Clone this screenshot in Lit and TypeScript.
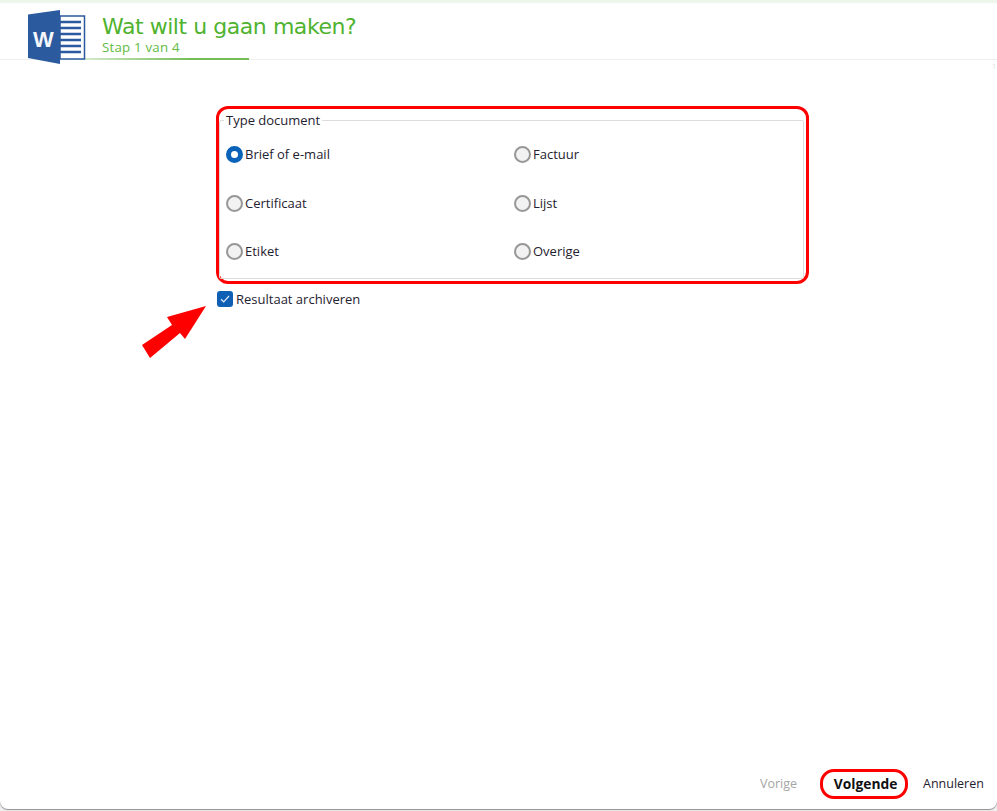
import { LitElement, html, css } from "lit";
import { customElement } from "lit/decorators.js";

const options = [
  ["Brief of e-mail", true],
  ["Factuur", false],
  ["Certificaat", false],
  ["Lijst", false],
  ["Etiket", false],
  ["Overige", false],
] as const;

@customElement("app-root")
export class AppRoot extends LitElement {
  static styles = css`
    :host {
      display: block;
      width: 997px;
      height: 811px;
      background: #f0f0f0;
      font-family: "Open Sans", "Noto Sans", "Liberation Sans", sans-serif;
      font-size: 13px;
      color: #1f2230;
      overflow: hidden;
      position: relative;
    }
    .strip { height: 3px; background: #eef5ea; }
    .window {
      height: 806px;
      background: #fff;
      border-radius: 0 0 8px 8px;
      display: flex;
      flex-direction: column;
      box-shadow: 0 1px 1px #8f8f8f;
    }
    .header {
      height: 57px;
      box-sizing: border-box;
      display: flex;
      align-items: flex-start;
      padding-left: 27px;
      position: relative;
      border-bottom: 1px solid #efefef;
    }
    .logo { margin-top: 6px; flex: none; position: relative; z-index: 1; }
    .headtext { margin-left: 15px; padding-top: 11px; color: #4fb330; }
    .title { font-size: 22px; line-height: 26px; font-family: "DejaVu Sans", sans-serif; letter-spacing: -0.45px; }
    .step { font-size: 13.3px; line-height: 14px; color: #62bb45; letter-spacing: 0.2px; }
    .accent {
      position: absolute;
      left: 60px;
      width: 189px;
      bottom: -1px;
      height: 2px;
      background: linear-gradient(to right, #eef5ea, #b5dca6 30%, #74bd56 70%, #74bd56);
    }
    .body { flex: 1; padding: 46px 0 0 216px; display: flex; flex-direction: column; align-items: flex-start; }
    .ring {
      width: 593px;
      height: 178px;
      box-sizing: border-box;
      border: 3px solid #f00;
      border-radius: 12px;
      padding: 11px 2px 0 0;
    }
    .group {
      height: 159px;
      box-sizing: border-box;
      border: 1px solid #dcdcdc;
      border-radius: 2px;
      position: relative;
      display: grid;
      grid-template-columns: 288px 1fr;
      grid-template-rows: repeat(3, 48.5px);
      padding: 9px 0 0 6px;
    }
    .legend {
      position: absolute;
      left: 4px;
      top: -8px;
      background: #fff;
      padding: 0 2px;
      line-height: 15px;
    }
    .opt { display: flex; align-items: center; gap: 2px; height: 17px; line-height: 17px; margin-top: 16px; }
    .radio {
      width: 13px;
      height: 13px;
      border: 2px solid #979797;
      border-radius: 50%;
      background: #f2f2f2;
      flex: none;
    }
    .radio.on { border: 5px solid #0a63b8; width: 7px; height: 7px; background: #fff; }
    .check { display: flex; align-items: center; gap: 3px; margin: 7px 0 0 1px; line-height: 16px; }
    .box {
      width: 16px;
      height: 16px;
      background: #0f5fb5;
      border-radius: 3px;
      display: flex;
      align-items: center;
      justify-content: center;
    }
    .arrow { position: absolute; left: 140px; top: 300px; }
    .footer {
      height: 44px;
      display: flex;
      align-items: flex-start;
      padding-left: 760px;
      line-height: 16px;
      font-size: 12.5px;
    }
    .prev { color: #a4a4a4; margin-top: 11px; }
    .next {
      font-weight: 700;
      font-size: 13.8px;
      color: #111;
      border: 3px solid #f00;
      border-radius: 14px;
      width: 88px;
      height: 30px;
      box-sizing: border-box;
      margin: 4px 0 0 23px;
      display: flex;
      align-items: center;
      justify-content: center;
      padding: 0 0 1px 3px;
    }
    .cancel { margin: 11px 0 0 15px; }
    .tick { position: absolute; right: 1px; top: 63px; font-size: 7px; color: #dcdcdc; line-height: 8px; }
  `;

  render() {
    return html`
      <div class="strip"></div>
      <div class="window">
        <div class="header">
          <svg class="logo" width="60" height="56" viewBox="0 0 60 56">
            <path d="M33 7H57.500V50H33Z" fill="#fff" stroke="#2b5a9e" stroke-width="1.500" />
            <path d="M33 13H54M33 19H54M33 25H54M33 31H54M33 37H54M33 43H54" stroke="#2b5a9e" stroke-width="2.500" />
            <path d="M1 5.500L33 1V55L1 49Z" fill="#2b5a9e" />
            <text x="6" y="38" font-family="Liberation Sans, sans-serif" font-weight="700" font-size="22" fill="#f4f6fa">W</text>
          </svg>
          <div class="headtext">
            <div class="title">Wat wilt u gaan maken?</div>
            <div class="step">Stap 1 van 4</div>
          </div>
          <div class="accent"></div>
        </div>
        <div class="body">
          <div class="ring">
            <div class="group">
              <div class="legend">Type document</div>
              ${options.map(
                ([label, on]) => html`<div class="opt"><span class="radio ${on ? "on" : ""}"></span><span>${label}</span></div>`
              )}
            </div>
          </div>
          <div class="check">
            <span class="box">
              <svg width="10" height="8" viewBox="0 0 10 8"><path d="M1 4.200L3.700 6.800L9 1" fill="none" stroke="#dfe9f6" stroke-width="1.200" /></svg>
            </span>
            <span>Resultaat archiveren</span>
          </div>
        </div>
        <div class="footer">
          <span class="prev">Vorige</span>
          <span class="next">Volgende</span>
          <span class="cancel">Annuleren</span>
        </div>
      </div>
      <div class="tick">1</div>
      <svg class="arrow" width="68" height="60" viewBox="0 0 68 60">
        <path d="M2 45L32 25L27 17L66 6L45 39L40 33L10 58Z" fill="#f00" />
      </svg>
    `;
  }
}
